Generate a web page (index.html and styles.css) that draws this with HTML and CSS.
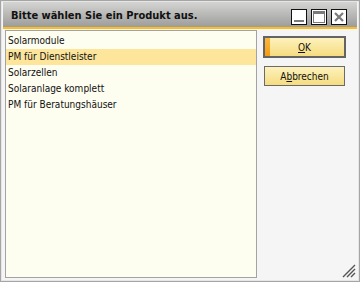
FILE: index.html
```html
<!DOCTYPE html>
<html>
<head>
<meta charset="utf-8">
<link rel="stylesheet" href="styles.css">
</head>
<body>
<div class="window">
  <div class="titlebar">
    <div class="title">Bitte wählen Sie ein Produkt aus.</div>
    <div class="tbtns">
      <div class="tbtn"><svg width="14" height="14" viewBox="0 0 14 14"><rect x="2" y="10" width="10" height="2" fill="#7a7a7a"/></svg></div>
      <div class="tbtn"><svg width="14" height="14" viewBox="0 0 14 14"><rect x="1.5" y="1.5" width="11" height="11" fill="none" stroke="#7a7a7a"/><rect x="1" y="1" width="12" height="3" fill="#7a7a7a"/></svg></div>
      <div class="tbtn"><svg width="14" height="14" viewBox="0 0 14 14"><path d="M3 3 L11 11 M11 3 L3 11" stroke="#7a7a7a" stroke-width="2.2"/></svg></div>
    </div>
  </div>
  <div class="accent"></div>
  <div class="body">
    <div class="list">
      <div class="item">Solarmodule</div>
      <div class="item sel">PM für Dienstleister</div>
      <div class="item">Solarzellen</div>
      <div class="item">Solaranlage komplett</div>
      <div class="item">PM für Beratungshäuser</div>
    </div>
    <div class="side">
      <div class="btn default"><span class="strip"></span><span class="lbl"><u>O</u>K</span></div>
      <div class="btn"><span class="lbl">A<u>b</u>brechen</span></div>
    </div>
    <svg class="grip" width="14" height="14" viewBox="0 0 14 14">
      <path d="M13 1 L1 13 M13 5 L5 13 M13 9 L9 13" stroke="#555" stroke-width="1.4"/>
    </svg>
  </div>
</div>
</body>
</html>
```
FILE: styles.css
```css
html, body { margin: 0; padding: 0; }
body { width: 360px; height: 282px; background: #f0f0f0; font-family: "DejaVu Sans Condensed", "DejaVu Sans", sans-serif; font-stretch: condensed; }
.window {
  box-sizing: border-box;
  width: 360px; height: 282px;
  border: 1px solid #a5a5a5;
  background: #f5f5f5;
  padding: 1px 2px 2px 2px;
  display: flex; flex-direction: column;
  position: relative;
  box-shadow: inset 0 0 0 1px #e6e6e6;
}
.titlebar {
  height: 25px;
  background: linear-gradient(#d4d4d2, #9c9c9a);
  display: flex; align-items: center; justify-content: space-between;
  padding: 0 10px 0 8px;
}
.title { font-weight: bold; font-size: 11px; color: #111; padding-top: 1px; }
.tbtns { display: flex; gap: 4px; padding-top: 4px; }
.tbtn {
  box-sizing: border-box; width: 16px; height: 16px;
  background: #fff; border: 1px solid #111;
  display: flex; align-items: center; justify-content: center;
}
.accent { height: 2px; background: #fdbd1d; }
.body { flex: 1; display: flex; padding: 1px 0 0 2px; position: relative; }
.list {
  box-sizing: border-box;
  width: 252px; height: 248px;
  background: #fdfdf0;
  border: 1px solid #a3a3a3;
  padding-top: 2px;
}
.item {
  height: 16px; line-height: 16px;
  font-size: 10px; color: #111;
  padding-left: 2px;
}
.item.sel { background: #fde59c; }
.side { display: flex; flex-direction: column; padding: 6px 0 0 6px; gap: 8px; }
.btn {
  box-sizing: border-box;
  width: 81px; height: 20px;
  border: 1px solid #6a6a6a;
  background: linear-gradient(#fdf2bd, #f6dc80);
  display: flex; align-items: center; justify-content: center;
  font-size: 10px; color: #111;
  position: relative;
  margin-left: 1px;
}
.btn.default { width: 83px; height: 22px; border: 2px solid #646464; margin-left: 0; }
.strip { position: absolute; left: 0; top: 0; bottom: 0; width: 5px; background: linear-gradient(#fbb83a, #f59a14); }
.grip { position: absolute; right: 1px; bottom: 1px; }
```
